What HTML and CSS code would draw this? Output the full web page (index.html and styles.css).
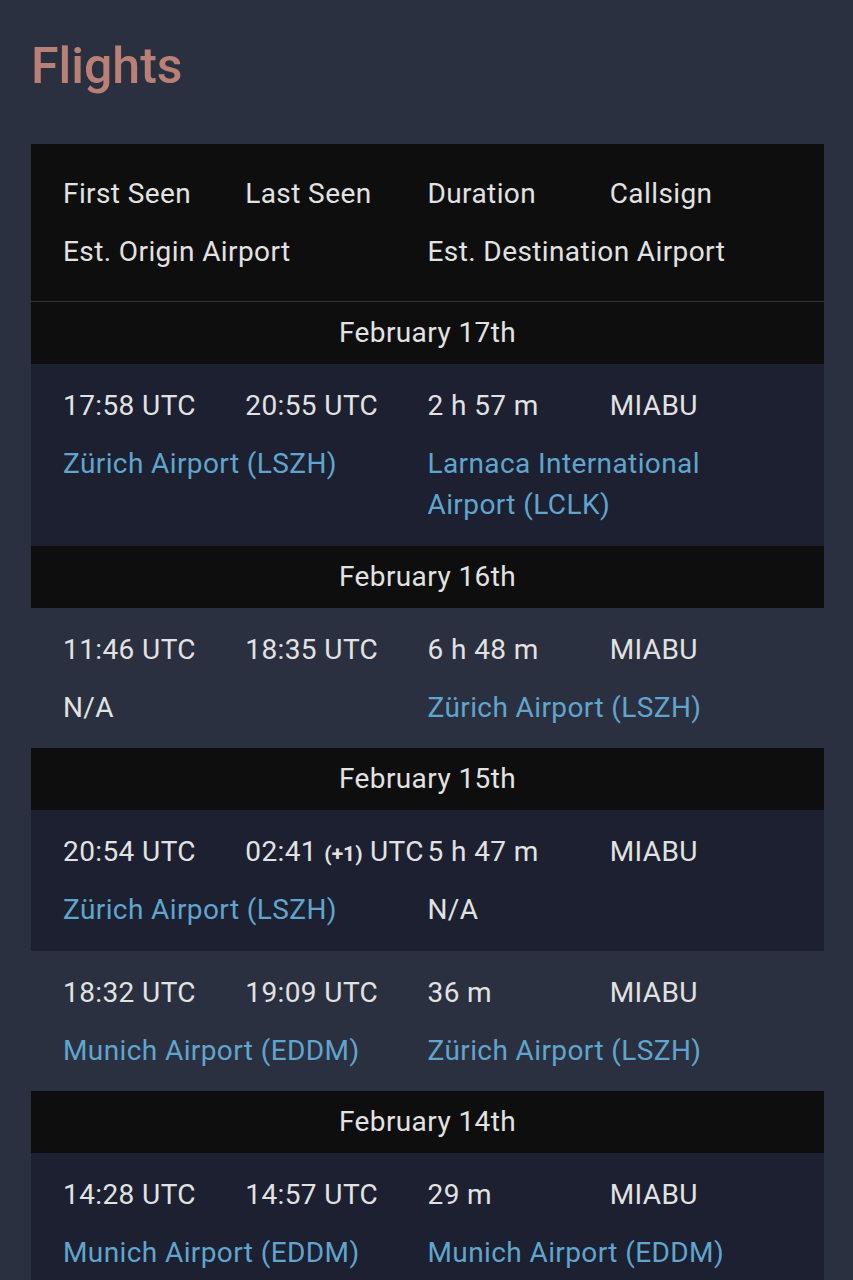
FILE: index.html
```html
<!DOCTYPE html>
<html lang="en">
<head>
<meta charset="utf-8">
<title>Flights</title>
<link rel="stylesheet" href="styles.css">
</head>
<body>
<h1 class="title">Flights</h1>
<div class="flights">
	<div class="head">
		<div class="cell">First Seen</div>
		<div class="cell">Last Seen</div>
		<div class="cell">Duration</div>
		<div class="cell">Callsign</div>
		<div class="cell wide">Est. Origin Airport</div>
		<div class="cell wide">Est. Destination Airport</div>
	</div>

	<div class="day">February 17th</div>
	<div class="row">
		<div class="cell">17:58 UTC</div>
		<div class="cell">20:55 UTC</div>
		<div class="cell">2 h 57 m</div>
		<div class="cell">MIABU</div>
		<div class="cell wide"><a href="#">Zürich Airport (LSZH)</a></div>
		<div class="cell wide"><a href="#">Larnaca International Airport (LCLK)</a></div>
	</div>

	<div class="day">February 16th</div>
	<div class="row alt">
		<div class="cell">11:46 UTC</div>
		<div class="cell">18:35 UTC</div>
		<div class="cell">6 h 48 m</div>
		<div class="cell">MIABU</div>
		<div class="cell wide">N/A</div>
		<div class="cell wide"><a href="#">Zürich Airport (LSZH)</a></div>
	</div>

	<div class="day">February 15th</div>
	<div class="row">
		<div class="cell">20:54 UTC</div>
		<div class="cell">02:41 <span class="plus">(+1)</span> UTC</div>
		<div class="cell">5 h 47 m</div>
		<div class="cell">MIABU</div>
		<div class="cell wide"><a href="#">Zürich Airport (LSZH)</a></div>
		<div class="cell wide">N/A</div>
	</div>
	<div class="row alt">
		<div class="cell">18:32 UTC</div>
		<div class="cell">19:09 UTC</div>
		<div class="cell">36 m</div>
		<div class="cell">MIABU</div>
		<div class="cell wide"><a href="#">Munich Airport (EDDM)</a></div>
		<div class="cell wide"><a href="#">Zürich Airport (LSZH)</a></div>
	</div>

	<div class="day">February 14th</div>
	<div class="row">
		<div class="cell">14:28 UTC</div>
		<div class="cell">14:57 UTC</div>
		<div class="cell">29 m</div>
		<div class="cell">MIABU</div>
		<div class="cell wide"><a href="#">Munich Airport (EDDM)</a></div>
		<div class="cell wide"><a href="#">Munich Airport (EDDM)</a></div>
	</div>
</div>
</body>
</html>
```

FILE: styles.css
```css
html, body {margin:0;padding:0;}
body {background:#2b3040;color:#e2e2e2;font-family:Roboto, "Liberation Sans", sans-serif;padding:0 29px 0 31px;}
.title {margin:0;padding:41px 0 0 0;height:144px;box-sizing:border-box;font-size:50px;font-weight:500;line-height:1;color:#b98176;}

.flights {font-size:28px;line-height:41px;letter-spacing:0.4px;}
.head, .row {display:grid;grid-template-columns:repeat(4, 1fr);row-gap:17px;padding:0 32px;}
.head {background:#0e0e0e;padding-top:29px;padding-bottom:29px;border-bottom:1px solid #333;}
.row {padding-top:21px;padding-bottom:20.5px;background:#1c2030;}
.row.alt {background:#2b3040;}
.cell {white-space:nowrap;min-width:0;}
.cell.wide {grid-column:span 2;white-space:normal;padding-right:16px;}
.day {background:#0e0e0e;text-align:center;padding:10px 0 11px;}
.plus {font-size:21px;font-weight:700;letter-spacing:0;line-height:1;}
a {color:#60a5cd;text-decoration:none;}
```
